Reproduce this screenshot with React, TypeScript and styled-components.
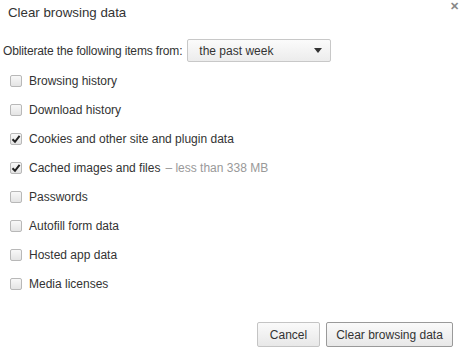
import React from "react";
import styled, { createGlobalStyle } from "styled-components";

const Global = createGlobalStyle`
  html, body { margin: 0; padding: 0; background: #fff; }
  body { font-family: "Liberation Sans", Arial, sans-serif; color: #333; }
`;

const Dialog = styled.div`
  width: 462px;
  height: 348px;
  position: relative;
  box-sizing: border-box;
  display: flex;
  flex-direction: column;
  overflow: hidden;
`;

const Title = styled.h1`
  margin: 0;
  padding: 5px 0 0 8px;
  font-size: 13.3px;
  font-weight: normal;
  color: #333;
  line-height: 16px;
`;

const Close = styled.div`
  position: absolute;
  top: 1px;
  right: 3px;
  font-size: 11px;
  font-weight: bold;
  color: #888;
  line-height: 10px;
`;

const FromRow = styled.div`
  display: flex;
  align-items: center;
  padding: 18px 0 0 3px;
  gap: 5px;
  font-size: 12px;
`;

const FromLabel = styled.span`
  letter-spacing: -0.15px;
`;

const Select = styled.div`
  width: 144px;
  height: 23px;
  box-sizing: border-box;
  border: 1px solid #c8c8c8;
  border-radius: 2px;
  background: linear-gradient(#fbfbfb, #ececec);
  display: flex;
  align-items: center;
  justify-content: space-between;
  padding: 0 8px 0 11px;
  font-size: 12px;
  color: #333;
`;

const Arrow = styled.span`
  width: 0;
  height: 0;
  border-left: 4px solid transparent;
  border-right: 4px solid transparent;
  border-top: 5px solid #333;
`;

const List = styled.div`
  display: flex;
  flex-direction: column;
  padding: 13px 0 0 10px;
  gap: 17px;
`;

const Row = styled.label`
  display: flex;
  align-items: center;
  gap: 7px;
  font-size: 12px;
  height: 12px;
  color: #333;
`;

const Box = styled.span`
  width: 12px;
  height: 12px;
  box-sizing: border-box;
  border: 1px solid #b8b8b8;
  border-radius: 2px;
  background: linear-gradient(#f8f8f8, #e4e4e4);
  display: flex;
  align-items: center;
  justify-content: center;
`;

const Note = styled.span`
  color: #999;
  margin-left: 5px;
`;

const Footer = styled.div`
  margin-top: auto;
  display: flex;
  justify-content: flex-end;
  gap: 6px;
  padding: 0 9px 1px 0;
`;

const Button = styled.button<{ $primary?: boolean }>`
  height: 25px;
  width: ${(p) => (p.$primary ? "127px" : "63px")};
  box-sizing: border-box;
  border: 1px solid ${(p) => (p.$primary ? "#9a9a9a" : "#c4c4c4")};
  border-radius: 2px;
  background: linear-gradient(#fafafa, #e8e8e8);
  font-family: "Liberation Sans", Arial, sans-serif;
  font-size: 12px;
  color: #333;
  padding: 0;
`;

const Check = () => (
  <svg width="10" height="10" viewBox="0 0 10 10">
    <path d="M1.5 5.2 L4 7.8 L8.6 1.8" fill="none" stroke="#222" strokeWidth="2" />
  </svg>
);

const items: { label: string; checked?: boolean; note?: string }[] = [
  { label: "Browsing history" },
  { label: "Download history" },
  { label: "Cookies and other site and plugin data", checked: true },
  { label: "Cached images and files", checked: true, note: "–  less than 338 MB" },
  { label: "Passwords" },
  { label: "Autofill form data" },
  { label: "Hosted app data" },
  { label: "Media licenses" },
];

export default function App() {
  return (
    <>
      <Global />
      <Dialog>
        <Title>Clear browsing data</Title>
        <Close>✕</Close>
        <FromRow>
          <FromLabel>Obliterate the following items from:</FromLabel>
          <Select>
            <span>the past week</span>
            <Arrow />
          </Select>
        </FromRow>
        <List>
          {items.map((it) => (
            <Row key={it.label}>
              <Box>{it.checked && <Check />}</Box>
              <span>
                {it.label}
                {it.note && <Note>{it.note}</Note>}
              </span>
            </Row>
          ))}
        </List>
        <Footer>
          <Button>Cancel</Button>
          <Button $primary>Clear browsing data</Button>
        </Footer>
      </Dialog>
    </>
  );
}
